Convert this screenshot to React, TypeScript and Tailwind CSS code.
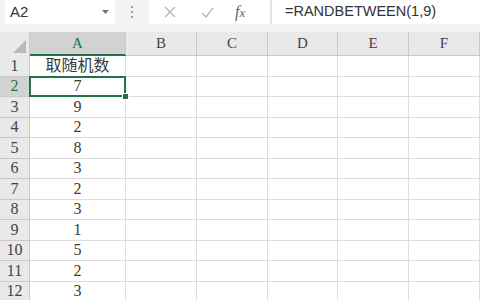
const cols = ["A", "B", "C", "D", "E", "F"];
const widths = ["w-[96px]", "w-[71px]", "w-[71px]", "w-[70px]", "w-[71px]", "w-[71px]"];
const values = ["取随机数", "7", "9", "2", "8", "3", "2", "3", "1", "5", "2", "3"];

const serif = "font-['Liberation_Serif','Noto_Sans_CJK_SC',serif]";

export default function App() {
  return (
    <div className="w-[480px] h-[300px] overflow-hidden bg-white select-none">
      {/* formula bar */}
      <div className="flex h-[32px] bg-[#f3f3f3]">
        <div className="ml-[5px] w-[110px] h-[24px] bg-white flex items-center justify-between pl-[5px] pr-[6px]">
          <span className="font-['Liberation_Sans',sans-serif] text-[15px] text-[#333]">A2</span>
          <svg width="7" height="4" viewBox="0 0 7 4">
            <path d="M0 0h7L3.5 4z" fill="#777" />
          </svg>
        </div>
        <div className="w-[34px] h-[24px] flex flex-col items-center justify-center gap-[3px]">
          <span className="w-[2px] h-[2px] bg-[#9a9a9a]" />
          <span className="w-[2px] h-[2px] bg-[#9a9a9a]" />
          <span className="w-[2px] h-[2px] bg-[#9a9a9a]" />
        </div>
        <div className="w-[121px] h-[24px] bg-white flex items-center">
          <svg className="ml-[15px]" width="12" height="12" viewBox="0 0 12 12">
            <path d="M1 1l10 10M11 1L1 11" stroke="#b5b5b5" strokeWidth="1.3" />
          </svg>
          <svg className="ml-[25px]" width="13" height="11" viewBox="0 0 13 11">
            <path d="M1 6l4 4L12 1" stroke="#b5b5b5" strokeWidth="1.3" fill="none" />
          </svg>
          <span className="ml-[21px] font-['Liberation_Serif',serif] italic text-[16px] text-[#666] leading-none">
            f<span className="text-[13px]">x</span>
          </span>
        </div>
        <div className="w-[2px] h-[24px] bg-[#e2e2e2]" />
        <div className="flex-1 h-[24px] bg-white flex items-center pl-[13px]">
          <span className="font-['Liberation_Sans',sans-serif] text-[14.5px] text-[#333]">=RANDBETWEEN(1,9)</span>
        </div>
      </div>

      {/* header row */}
      <div className="flex h-[24px] bg-[#e9e9e9]">
        <div className="w-[30px] h-full border-r border-[#c8c8c8] flex items-end justify-end pr-[3px] pb-[3px]">
          <svg width="13" height="13" viewBox="0 0 13 13">
            <path d="M13 0V13H0z" fill="#b9b9b9" />
          </svg>
        </div>
        {cols.map((c, i) => (
          <div
            key={c}
            className={`${widths[i]} h-full flex items-center justify-center border-r border-[#c8c8c8] ${serif} text-[15px] ${
              i === 0 ? "bg-[#d2d2d2] text-[#217346] border-b-2 border-b-[#217346]" : "text-[#444] border-b border-b-[#c8c8c8]"
            }`}
          >
            {c}
          </div>
        ))}
      </div>

      {/* rows */}
      {values.map((v, r) => (
        <div key={r} className="flex h-[20.5px]">
          <div
            className={`w-[30px] h-full flex items-center justify-center border-r border-b border-[#c8c8c8] ${serif} text-[16px] ${
              r === 1 ? "bg-[#d2d2d2] text-[#217346]" : "bg-[#e9e9e9] text-[#444]"
            }`}
          >
            {r + 1}
          </div>
          {cols.map((c, i) => (
            <div
              key={c}
              className={`${widths[i]} h-full relative flex items-center justify-center border-r border-b border-[#dcdcdc] ${serif} text-[16px] text-[#3a3a3a]`}
            >
              {i === 0 ? v : null}
              {i === 0 && r === 1 && (
                <div className="absolute z-10 -left-px -top-px -right-px -bottom-px border-2 border-[#217346]">
                  <div className="absolute -right-[5px] -bottom-[5px] w-[7px] h-[7px] bg-[#217346] border border-white" />
                </div>
              )}
            </div>
          ))}
        </div>
      ))}
    </div>
  );
}
